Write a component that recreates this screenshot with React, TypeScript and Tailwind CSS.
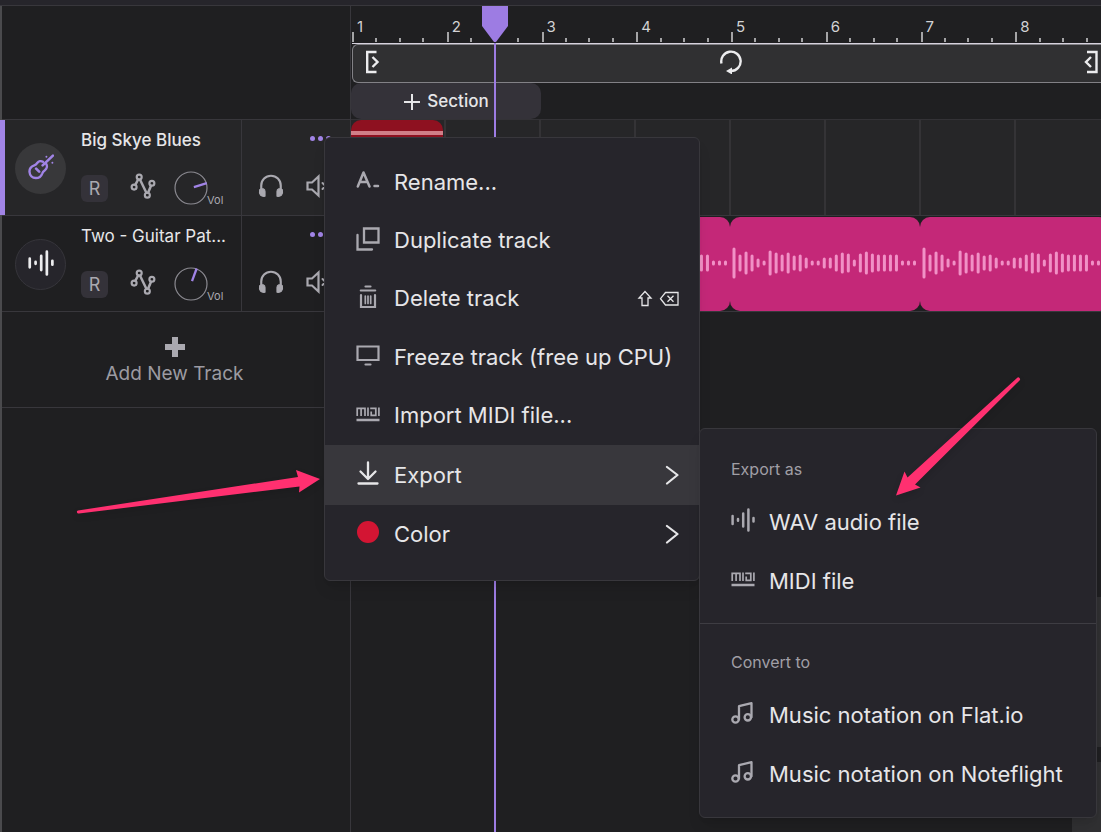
import type { ReactNode } from 'react';

const measures = [1, 2, 3, 4, 5, 6, 7, 8];

// Half heights of the waveform bars in one two-measure clip
const wave = [15, 8, 11, 8, 4, 2, 12, 10, 8, 10, 7, 8, 5, 2, 2, 5, 5, 8, 10, 9, 3, 9, 11, 9, 8, 8, 8, 8, 2, 2, 2];

function Icon({ children, className = 'w-6 h-6' }: { children: ReactNode; className?: string }) {
  return (
    <svg
      viewBox="0 0 24 24"
      className={`shrink-0 ${className}`}
      fill="none"
      stroke="currentColor"
      strokeWidth="2"
      strokeLinecap="round"
      strokeLinejoin="round"
      aria-hidden="true"
    >
      {children}
    </svg>
  );
}

function RenameIcon() {
  return (
    <Icon>
      <path d="M1.8 18.500L7.500 4.500l6 14M4 14h7.200M18.500 18h3.500" strokeWidth="2.500" />
    </Icon>
  );
}

function DuplicateIcon() {
  return (
    <Icon>
      <path d="M8 1.500h14.500v14H8zM1.500 8v14.500h14.500" strokeWidth="2.300" strokeLinejoin="miter" />
    </Icon>
  );
}

function TrashIcon() {
  return (
    <Icon>
      <path d="M9.500 1.500h5M4.800 5.500h14.400M5 10v12h14V10" strokeWidth="2.200" strokeLinejoin="miter" />
      <path d="M9.300 11v7.500M12 11v7.500M14.700 11v7.500" strokeWidth="1.700" />
    </Icon>
  );
}

function MonitorIcon() {
  return (
    <Icon>
      <path d="M1.500 3.500h21v13.500h-21zM9.500 21.500h5" strokeWidth="2.200" strokeLinejoin="miter" />
    </Icon>
  );
}

function MidiIcon() {
  return (
    <Icon>
      <path d="M1.200 14V6.300h7.800V14M5.100 6.500V14M12 5.500V14M14.200 6.300h5.600v7h-4.600V9.500M22.900 5.500V14" strokeWidth="1.700" strokeLinecap="butt" strokeLinejoin="miter" />
      <path d="M.5 18h23" strokeWidth="2.500" strokeLinecap="butt" />
    </Icon>
  );
}

function DownloadIcon() {
  return (
    <Icon>
      <path d="M12 1.500v16M4.500 10.500l7.500 7.500 7.500-7.500M2.500 22.500h19" strokeWidth="2.300" />
    </Icon>
  );
}

function WaveIcon({ className }: { className?: string }) {
  return (
    <Icon className={className}>
      <path d="M1.600 8v8M7 11v1.800M12.200 5.500v13M17.400 1.500v21M22.500 10v3.500" strokeWidth="2.500" />
    </Icon>
  );
}

function NotesIcon() {
  return (
    <Icon>
      <circle cx="4.500" cy="18.500" r="3.200" strokeWidth="2.300" />
      <circle cx="16.800" cy="16.300" r="3.200" strokeWidth="2.300" />
      <path d="M8 18.500V5.200L20.500 2.200v14" strokeWidth="2.300" />
    </Icon>
  );
}

function GuitarIcon() {
  return (
    <Icon className="w-[26px] h-[26px]">
      <path d="M13.800 7.200c-1.800-1.100-4-.6-5.100.9-.8 1.100-1.400 1.900-2.900 2.400-2.800 1-4.600 3.200-4.400 6 .2 3.300 2.700 5.700 5.800 5.700 3 0 5.100-1.800 6-4.400.5-1.600 1.200-2.100 2.400-2.900 1.900-1.300 2.400-3.700 1.200-5.700" strokeWidth="2.200" />
      <path d="M13.500 10.500L23 1.500M7.500 13.500l2.800 2.800" strokeWidth="2.400" />
      <path d="M17 2.500h.01M22.500 8h.01" strokeWidth="1.800" />
    </Icon>
  );
}

function AutomationIcon() {
  return (
    <Icon className="w-[26px] h-[26px]">
      <circle cx="3.800" cy="13" r="2.300" />
      <circle cx="8.500" cy="3.800" r="2.300" />
      <circle cx="16" cy="20.500" r="2.300" />
      <circle cx="20.200" cy="9.500" r="2.300" />
      <path d="M4.900 11L7.500 6M9.300 6.200l5.800 12M16.700 18.300l2.700-6.600" strokeWidth="2.300" />
    </Icon>
  );
}

function HeadphonesIcon() {
  return (
    <Icon className="w-[26px] h-[26px]">
      <path d="M3 15v-3.500a9 9 0 0 1 18 0V15" />
      <path d="M1.500 15.500c2.500-2 5-.8 5 1.500v4.500c-3.500.5-6-1.500-5-6zM22.500 15.500c-2.500-2-5-.8-5 1.500v4.500c3.500.5 6-1.500 5-6z" fill="currentColor" strokeWidth="1" />
    </Icon>
  );
}

function MuteIcon() {
  return (
    <Icon>
      <path d="M1.500 8.500v7H6l6.500 6V2.500l-6.500 6z" strokeWidth="2.200" strokeLinejoin="miter" />
      <path d="M16.500 9l6 6M22.500 9l-6 6" />
    </Icon>
  );
}

function Chevron() {
  return (
    <svg viewBox="0 0 14 20" className="w-[14px] h-5 shrink-0" fill="none" stroke="currentColor" strokeWidth="2.200" strokeLinecap="round" strokeLinejoin="round" aria-hidden="true">
      <path d="M2 2l10.500 8L2 18.500" />
    </svg>
  );
}

interface MenuItemProps {
  icon: ReactNode;
  label: string;
  active?: boolean;
  children?: ReactNode;
}

function MenuItem({ icon, label, active, children }: MenuItemProps) {
  return (
    <button
      type="button"
      className={`flex w-full items-center gap-[14px] pl-[31px] pr-5 text-left text-[22px] text-[#e6e6e8] ${
        active ? 'h-[60px] bg-[#38373c]' : 'min-h-[58px]'
      }`}
    >
      <span className={`mb-1 ${active ? 'text-[#e6e6e8]' : 'text-[#aaa9b0]'}`}>{icon}</span>
      <span className="flex-1 whitespace-nowrap">{label}</span>
      {children}
    </button>
  );
}

interface TrackProps {
  name: string;
  icon: ReactNode;
  selected?: boolean;
  angle: number;
}

function Track({ name, icon, selected, angle }: TrackProps) {
  return (
    <div
      className={`relative flex h-24 border-b border-[#38373c] ${selected ? 'bg-[#262628]' : 'bg-[#1f1f21]'}`}
    >
      {selected && <div className="absolute inset-y-0 -left-[2px] w-[5px] bg-[#a184e6]" />}
      <div className="flex w-[240px] items-center border-r border-[#38373c] pl-[13px]">
        <div
          className={`mt-0.5 flex h-[51px] w-[51px] shrink-0 items-center justify-center rounded-full pb-[3px] ${
            selected ? 'bg-[#38383a] text-[#a184e6]' : 'border border-[#36353b] bg-[#26252b] text-[#ececee]'
          }`}
        >
          {icon}
        </div>
        <div className="flex h-full flex-1 flex-col justify-between pb-[7px] pl-[15px] pt-2">
          <div className={`whitespace-nowrap text-[17px] leading-6 text-[#e6e6e8] ${selected ? 'font-medium' : ''}`}>{name}</div>
          <div className="flex items-center">
            <button type="button" aria-label="Record" className="h-[27px] w-[27px] rounded-md bg-[#343239] text-[18px] leading-7 text-[#aaa9b0]">
              R
            </button>
            <button type="button" aria-label="Automation" className="mb-1 ml-[22px] text-[#aaa9b0]">
              <AutomationIcon />
            </button>
            <svg viewBox="0 0 34 34" className="ml-[18px] h-[34px] w-[34px]" fill="none" aria-hidden="true">
              <circle cx="17" cy="17" r="16" stroke="#8b8a91" strokeWidth="1.200" />
              <path d="M20 17h13.500" stroke="#a184e6" strokeWidth="2.300" transform={`rotate(${angle} 17 17)`} />
            </svg>
            <span className="-ml-px mt-6 text-[11px] leading-4 text-[#aaa9b0]">Vol</span>
          </div>
        </div>
      </div>
      <div className="flex flex-1 flex-col justify-between pb-4 pl-4">
        <button type="button" aria-label="Track menu" className="flex gap-[3px] pl-[52px] pt-4">
          <span className="h-[5px] w-[5px] rounded-full bg-[#a184e6]" />
          <span className="h-[5px] w-[5px] rounded-full bg-[#a184e6]" />
          <span className="h-[5px] w-[5px] rounded-full bg-[#a184e6]" />
        </button>
        <div className="flex items-center gap-[22px] text-[#aaa9b0]">
          <button type="button" aria-label="Solo"><HeadphonesIcon /></button>
          <button type="button" aria-label="Mute"><MuteIcon /></button>
        </div>
      </div>
    </div>
  );
}

function Clip() {
  return (
    <div className="rounded-[10px] bg-[#c42878]">
      <svg viewBox="0 0 189 94" className="h-[94px] w-full" preserveAspectRatio="none" stroke="#f191c6" strokeWidth="3" strokeLinecap="round" aria-hidden="true">
        {wave.map((h, i) => (
          <path key={i} d={`M${4 + i * 6} ${46 - h + 1}v${h * 2 - 2}`} />
        ))}
      </svg>
    </div>
  );
}

function Sidebar() {
  return (
    <aside className="flex w-[351px] shrink-0 flex-col border-l-2 border-r border-l-[#4a4a4d] border-r-[#38373c]">
      <div className="h-[114px] border-b border-[#38373c]" />
      <Track name="Big Skye Blues" icon={<GuitarIcon />} selected angle={-17} />
      <Track name="Two - Guitar Pat..." icon={<WaveIcon className="h-[26px] w-[26px]" />} angle={-70} />
      <button type="button" className="flex h-24 flex-col items-center justify-center gap-0.5 border-b border-[#38373c] pr-[3px] pt-1 text-[19px] leading-7 text-[#9c9ba2]">
        <svg viewBox="0 0 22 22" className="h-[22px] w-[22px]" fill="#aaa9b0" aria-hidden="true">
          <path d="M8 1h6v7h7v6h-7v7H8v-7H1V8h7z" />
        </svg>
        Add New Track
      </button>
    </aside>
  );
}

function Timeline() {
  return (
    <main className="relative min-w-0 flex-1 overflow-hidden">
      {/* Ruler */}
      <div className="-mr-2 grid h-[37px] grid-cols-8 border-b border-transparent">
        {measures.map((n) => (
          <div key={n} className="relative grid grid-cols-4 items-end pl-px">
            <span className="absolute left-[6px] top-[11px] text-[15px] leading-5 text-[#d2d2d4]">{n}</span>
            <span className="h-[10px] w-0.5 bg-[#a4a4a6]" />
            <span className="h-1 w-0.5 bg-[#a4a4a6]" />
            <span className="h-1 w-0.5 bg-[#a4a4a6]" />
            <span className="h-1 w-0.5 bg-[#a4a4a6]" />
          </div>
        ))}
      </div>

      {/* Loop region */}
      <div className="ml-px border-t border-[#d6d2de]">
        <div className="flex h-[39px] items-center justify-between rounded-l-md border border-r-0 border-[#828186] bg-[#303032] pb-[3px] pl-3 pr-0.5 text-[#ececee]">
          <svg viewBox="0 0 16 24" className="h-6 w-4" fill="none" stroke="currentColor" strokeWidth="2.400" aria-hidden="true">
            <path d="M11.500 2H2.200v20h9.300M7.500 7l5 5-5 5" />
          </svg>
          <svg viewBox="0 0 24 24" className="mr-0.5 h-6 w-6" fill="none" stroke="currentColor" strokeWidth="2.400" aria-hidden="true">
            <path d="M2.500 13.500A9.700 9.700 0 1 1 12 21" />
            <path d="M13 17.500v7l-6-3.500z" fill="currentColor" stroke="none" />
          </svg>
          <svg viewBox="0 0 16 24" className="h-6 w-4" fill="none" stroke="currentColor" strokeWidth="2.400" aria-hidden="true">
            <path d="M4 2h9.500v20H4M8 7l-5 5 5 5" />
          </svg>
        </div>
      </div>

      <div className="h-[37px] border-b border-[#333236]">
        <button type="button" className="flex h-9 w-[190px] items-center justify-center gap-1.5 rounded-[10px] bg-[#343239] pt-px text-[17px] font-medium text-[#e6e6e8]">
          <svg viewBox="0 0 18 18" className="h-[18px] w-[18px]" stroke="currentColor" strokeWidth="2" aria-hidden="true">
            <path d="M9 1v16M1 9h16" />
          </svg>
          Section
        </button>
      </div>

      {/* Lanes */}
      <div className="border-b border-[#38373c] bg-[#262628]">
        <div className="-mr-[10px] grid h-[95px] grid-cols-8">
          {measures.map((n) => (
            <div key={n} className="border-r-2 border-[#343336]">
              {n === 1 && (
                <div className="mr-px h-[90px] overflow-hidden rounded-t-[10px] bg-[#8e1120] pt-[11px]">
                  <div className="h-1 bg-[#d17f88]" />
                </div>
              )}
            </div>
          ))}
        </div>
      </div>
      <div className="-mr-2 grid h-24 grid-cols-4 border-b border-[#38373c] pt-px">
        <Clip />
        <Clip />
        <Clip />
        <Clip />
      </div>

      {/* Playhead */}
      <div className="absolute inset-y-0 left-[131px] flex w-[26px] flex-col items-center">
        <svg viewBox="0 0 26 37" className="h-[37px] w-[26px] shrink-0" fill="#9d7ce3" aria-hidden="true">
          <path d="M0 0h26v20L14 36h-2L0 20z" />
        </svg>
        <div className="w-0.5 flex-1 bg-[#9d7ce3]" />
      </div>
    </main>
  );
}

function TrackMenu() {
  return (
    <div className="absolute left-[324px] top-[137px] w-[376px] rounded-md border border-[#38373c] bg-[#26252b] pb-[17px] pt-[15px] shadow-lg">
      <div className="grid h-[292px]">
        <MenuItem icon={<RenameIcon />} label="Rename..." />
        <MenuItem icon={<DuplicateIcon />} label="Duplicate track" />
        <MenuItem icon={<TrashIcon />} label="Delete track">
          <svg viewBox="0 0 42 18" className="h-[18px] w-[42px]" fill="none" stroke="currentColor" strokeWidth="1.300" aria-hidden="true">
            <path d="M8 1.500L2 8h3v7.500h6V8h3z" />
            <path d="M28.500 2.500H41v12.500H28.500L23.500 8.700zM30.500 5.700l6 6M36.500 5.700l-6 6" />
          </svg>
        </MenuItem>
        <MenuItem icon={<MonitorIcon />} label="Freeze track (free up CPU)" />
        <MenuItem icon={<MidiIcon />} label="Import MIDI file..." />
      </div>
      <MenuItem icon={<DownloadIcon />} label="Export" active>
        <Chevron />
      </MenuItem>
      <MenuItem icon={<span className="mx-px block h-[22px] w-[22px] rounded-full bg-[#d31533]" />} label="Color">
        <Chevron />
      </MenuItem>
    </div>
  );
}

function ExportMenu() {
  return (
    <div className="absolute left-[699px] top-[428px] w-[398px] rounded-md border border-[#38373c] bg-[#26252b] shadow-lg">
      <div className="border-b border-[#3e3d43] pb-[13px] pt-6">
        <h2 className="mb-2 pl-[31px] text-[16px] leading-8 text-[#a09fa6]">Export as</h2>
        <div className="grid gap-px">
          <MenuItem icon={<WaveIcon />} label="WAV audio file" />
          <MenuItem icon={<MidiIcon />} label="MIDI file" />
        </div>
      </div>
      <div className="pb-[14px] pt-[22px]">
        <h2 className="mb-2 pl-[31px] text-[16px] leading-8 text-[#a09fa6]">Convert to</h2>
        <div className="grid gap-px">
          <MenuItem icon={<NotesIcon />} label="Music notation on Flat.io" />
          <MenuItem icon={<NotesIcon />} label="Music notation on Noteflight" />
        </div>
      </div>
    </div>
  );
}

export default function App() {
  return (
    <div className="relative flex min-h-screen flex-col overflow-hidden bg-[#1f1f21] font-['Inter',sans-serif]">
      <div className="h-[6px] border-b border-[#38373c] bg-[#26252b]" />
      <div className="flex flex-1">
        <Sidebar />
        <Timeline />
      </div>

      {/* Panels docked in the corner */}
      <div className="absolute bottom-0 right-0 flex w-[29px] flex-col gap-[15px]">
        <div className="h-[150px] bg-[#303032]" />
        <div className="h-[70px] bg-[#303032]" />
      </div>

      <TrackMenu />
      <ExportMenu />

      {/* Pointer arrows */}
      <svg viewBox="0 0 246 48" className="pointer-events-none absolute left-[76px] top-[468px] h-12 w-[246px] drop-shadow-md" fill="#ff3070" aria-hidden="true">
        <path d="M2 42.500L222 9l-2-7 24 9-21 13.500.5-6L3 45.500a1.500 1.500 0 0 1-1-3z" />
      </svg>
      <svg viewBox="0 0 128 122" className="pointer-events-none absolute left-[894px] top-[376px] h-[122px] w-32 drop-shadow-md" fill="#ff3070" aria-hidden="true">
        <path d="M2 119.500L10.500 95.500l3 6L123 2a1.600 1.600 0 0 1 2.500 2.500L21 108.500l5.500 3z" />
      </svg>
    </div>
  );
}
